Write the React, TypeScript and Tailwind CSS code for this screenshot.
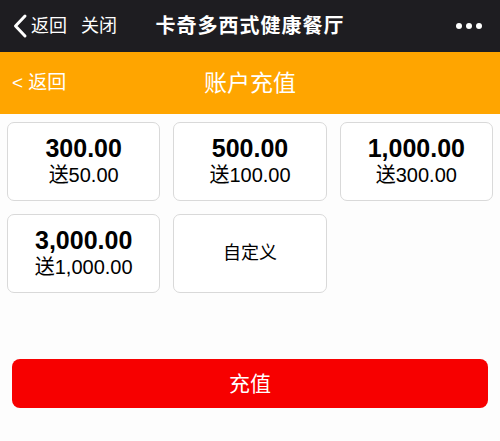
import React from 'react'

const font = { fontFamily: '"Liberation Sans", "Noto Sans CJK SC", sans-serif' }

const options = [
  { amount: '300.00', bonus: '送50.00' },
  { amount: '500.00', bonus: '送100.00' },
  { amount: '1,000.00', bonus: '送300.00' },
  { amount: '3,000.00', bonus: '送1,000.00' },
]

export default function App() {
  return (
    <div className="h-[441px] w-[500px] overflow-hidden bg-[#fdfdfd]" style={font}>
      {/* wechat bar */}
      <div className="flex h-[52px] items-center bg-[#1e1d21] px-[12px] text-white">
        <div className="flex w-[140px] items-center">
          <svg width="16" height="26" viewBox="0 0 16 26" className="mr-[3px]">
            <path d="M13 3 L3.5 13 L13 23" fill="none" stroke="white" strokeWidth="3" strokeLinecap="round" strokeLinejoin="round" />
          </svg>
          <span className="text-[18px]">返回</span>
          <span className="ml-[14px] text-[18px]">关闭</span>
        </div>
        <div className="flex-1 text-center text-[20px] font-bold tracking-[1px]">卡奇多西式健康餐厅</div>
        <div className="flex w-[140px] justify-end gap-[4px] pr-[6px]">
          <span className="h-[6px] w-[6px] rounded-full bg-white" />
          <span className="h-[6px] w-[6px] rounded-full bg-white" />
          <span className="h-[6px] w-[6px] rounded-full bg-white" />
        </div>
      </div>

      {/* orange header */}
      <div className="relative flex h-[62px] items-center justify-center bg-[#ffa500] text-white">
        <span className="absolute left-[12px] text-[19px]">&lt; 返回</span>
        <span className="text-[23px]">账户充值</span>
      </div>

      <div className="grid grid-cols-3 gap-[13px] px-[7px] pt-[8px]">
        {options.map((o) => (
          <div
            key={o.amount}
            className="flex h-[79px] flex-col items-center justify-center rounded-[7px] border border-[#d9d9d9] bg-white pb-[2px] text-black"
          >
            <div className="text-[25px] font-bold leading-[30px]">{o.amount}</div>
            <div className="text-[20px] leading-[25px]">{o.bonus}</div>
          </div>
        ))}
        <div className="flex h-[79px] items-center justify-center rounded-[7px] border border-[#d9d9d9] bg-white text-[18px] text-black">
          自定义
        </div>
      </div>

      <div className="px-[12px] pt-[66px]">
        <button className="flex h-[49px] w-full items-center justify-center rounded-[8px] bg-[#f70000] text-[21px] text-white">
          充值
        </button>
      </div>
    </div>
  )
}
